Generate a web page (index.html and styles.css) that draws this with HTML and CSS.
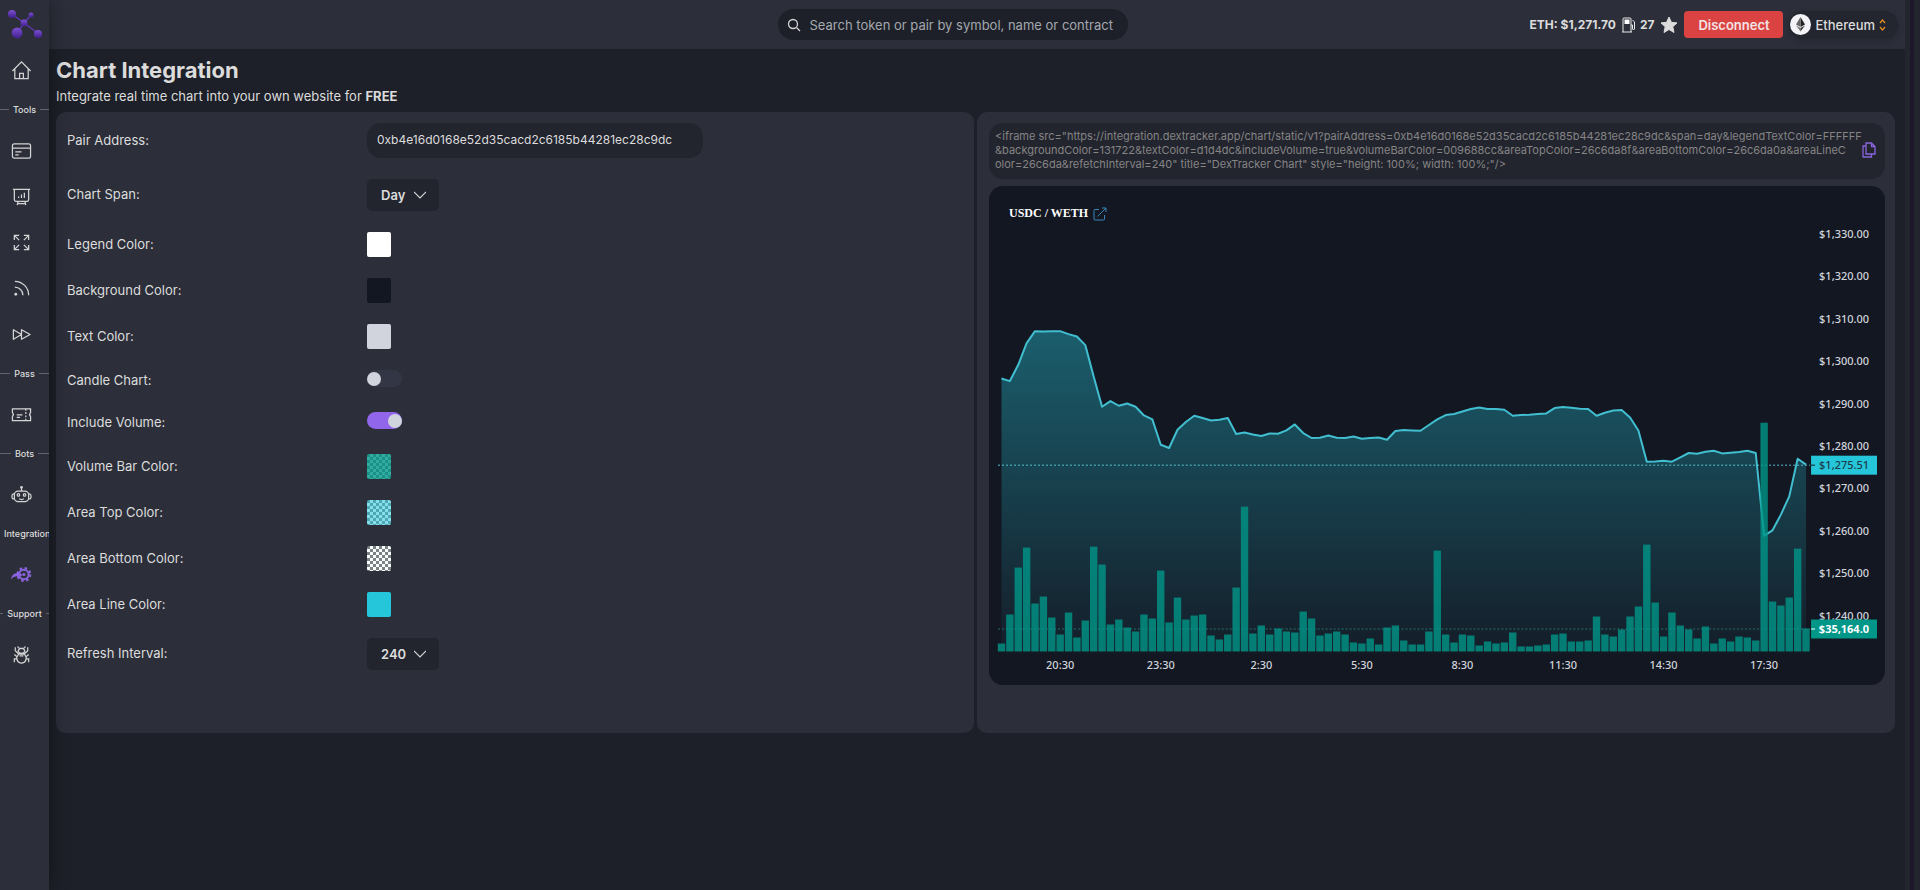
FILE: index.html
```html
<!DOCTYPE html>
<html lang="en">
<head>
  <meta charset="UTF-8" />
  <title>Chart Integration</title>
  <link rel="stylesheet" href="styles.css">
</head>
<body>
  <aside class="sidebar">
    <a class="logo" href="#" aria-label="DexTracker">
      <svg width="36" height="30" viewBox="0 0 36 30">
        <defs>
          <linearGradient id="ball" x1="0" y1="0" x2="0" y2="1">
            <stop offset="0" stop-color="#7d4fd0" />
            <stop offset="1" stop-color="#41208f" />
          </linearGradient>
        </defs>
        <path d="M5 5L17 14L32 25M24 6L17 14L10 24" stroke="#5f37b4" stroke-width="1.4" fill="none" />
        <g fill="url(#ball)">
          <circle cx="5" cy="5" r="4" />
          <circle cx="24" cy="6" r="2.5" />
          <circle cx="17" cy="14" r="3.4" />
          <circle cx="10" cy="24" r="5.4" />
          <circle cx="31" cy="25" r="4" />
        </g>
      </svg>
    </a>
    <nav>
      <a class="nav-item" href="#" aria-label="Home">
        <svg viewBox="0 0 22 22"><path d="M1.500 11.500L11 2L20.500 11.500M4 9.500V19.500H18V9.500M9 19.500V14H13V19.500" /></svg>
      </a>
      <div class="divider"><span>Tools</span></div>
      <a class="nav-item" href="#" aria-label="Card">
        <svg viewBox="0 0 22 22"><rect x="1.500" y="4" width="19" height="15" rx="2" /><path d="M1.500 8.500H20.500M4.500 12.500H11M4.500 15.500H8" /></svg>
      </a>
      <a class="nav-item" href="#" aria-label="Charts">
        <svg viewBox="0 0 22 22"><path d="M2 3.500H20M3.500 3.500V14.500Q3.500 16 5 16H17Q18.500 16 18.500 14.500V3.500M8 12.500V11M11 12.500V9M14 12.500V7M7.500 16L6.500 20M14.500 16L15.500 20M7 18.500H15" /></svg>
      </a>
      <a class="nav-item" href="#" aria-label="Multi chart">
        <svg viewBox="0 0 22 22"><path d="M3.500 8.500V3.500H8.500M3.500 3.500L8.500 8.500M13.500 3.500H18.500V8.500M18.500 3.500L13.500 8.500M3.500 13.500V18.500H8.500M3.500 18.500L8.500 13.500M18.500 13.500V18.500H13.500M18.500 18.500L13.500 13.500" /></svg>
      </a>
      <a class="nav-item" href="#" aria-label="Feed">
        <svg viewBox="0 0 22 22"><path d="M4 3.500A14.500 14.500 0 0 1 18.500 18M4 9.500A8.500 8.500 0 0 1 12.500 18" /><circle class="dot" cx="5" cy="17" r="1.500" /></svg>
      </a>
      <a class="nav-item" href="#" aria-label="Fast forward">
        <svg viewBox="0 0 22 22"><path d="M2.500 6V16L11 11ZM11 6V16L20 11Z" stroke-linejoin="round" /></svg>
      </a>
      <div class="divider"><span>Pass</span></div>
      <a class="nav-item" href="#" aria-label="Pass">
        <svg viewBox="0 0 22 22"><path d="M1.500 5H20.500V9Q18.500 11 20.500 13V17.500H1.500V13Q3.500 11 1.500 9ZM6 11.500H12M6 14H9.500" /><path d="M15.500 5V17.500" stroke-dasharray="2 1.500" /></svg>
      </a>
      <div class="divider"><span>Bots</span></div>
      <a class="nav-item" href="#" aria-label="Bots">
        <svg viewBox="0 0 22 22"><rect x="3.500" y="7.500" width="15" height="11" rx="4" /><path d="M3.500 10.500Q1 10 1 13Q1 16 3.500 15.500M18.500 10.500Q21 10 21 13Q21 16 18.500 15.500M11 7.500V4M8.500 15.500Q11 17 13.500 15.500" /><circle cx="7.800" cy="11.500" r="1.300" /><circle cx="14.200" cy="11.500" r="1.300" /><circle class="dot" cx="11" cy="3.500" r="1.400" /></svg>
      </a>
      <div class="divider"><span>Integration</span></div>
      <a class="nav-item active" href="#" aria-label="Integration">
        <svg viewBox="0 0 22 22"><circle cx="13.500" cy="11" r="5" stroke-width="2.200" /><circle cx="13.500" cy="11" r="6.800" stroke-width="2" stroke-dasharray="2.670 2.670" /><circle class="dot" cx="13.500" cy="11" r="1.700" /><path class="dot" d="M0 16Q1 9.500 7 9.500V7.500L12 11.500L7 15V13Q3 12.500 0 16Z" /></svg>
      </a>
      <div class="divider"><span>Support</span></div>
      <a class="nav-item" href="#" aria-label="Report a bug">
        <svg viewBox="0 0 22 22"><path d="M7 2.500Q7.500 4.500 9 4.500H13Q14.500 4.500 15 2.500M7.500 7.500Q8 4.500 11 4.500Q14 4.500 14.500 7.500L13 9.500H9ZM8 10.500H14L16 14Q16 20 11 20Q6 20 6 14ZM4.500 3.500V7L8 10.500M17.500 3.500V7L14 10.500M6 13L3.500 11M16 13L18.500 11M6 15.500H3.500V19M16 15.500H18.500V19M9 12.500H13" /></svg>
      </a>
    </nav>
  </aside>

  <div class="page">
    <header>
      <form class="search">
        <svg width="14" height="14" viewBox="0 0 14 14"><circle cx="6" cy="6" r="4.500" /><path d="M9.500 9.500L13 13" /></svg>
        <input type="text" aria-label="Search" placeholder="Search token or pair by symbol, name or contract">
      </form>
      <div class="account">
        <span>ETH: $1,271.70</span>
        <span class="gas">
          <svg width="14" height="16" viewBox="0 0 14 16"><path d="M1 15V2Q1 1 2 1H8Q9 1 9 2V15M0 15H10M9 8H10.500V12Q11.500 14 12.500 12V5L10.500 3" stroke="#e8e8e8" fill="none" /><path d="M2.500 2.500H7.500V7H2.500Z" fill="#fff" /></svg>
          27
        </span>
        <button class="star" aria-label="Favorites">
          <svg width="18" height="18" viewBox="0 0 18 18"><path d="M9 1L11.400 6.300L17 6.900L12.800 10.700L14 16.500L9 13.500L4 16.500L5.200 10.700L1 6.900L6.600 6.300Z" fill="#dcdcdc" stroke="#dcdcdc" stroke-linejoin="round" /></svg>
        </button>
        <button class="disconnect">Disconnect</button>
        <button class="network">
          <svg width="21" height="21" viewBox="0 0 21 21"><circle cx="10.500" cy="10.500" r="10.500" fill="#f4f4f8" /><path d="M10.500 3L15 10.500L10.500 13Z" fill="#222" /><path d="M10.500 3L6 10.500L10.500 13Z" fill="#666" /><path d="M6 11.500L10.500 17.500V14Z" fill="#777" /><path d="M15 11.500L10.500 17.500V14Z" fill="#333" /></svg>
          Ethereum
          <svg width="7" height="12" viewBox="0 0 7 12"><path d="M1 4L3.500 1L6 4M1 8L3.500 11L6 8" stroke="#e8911c" stroke-width="1.200" fill="none" /></svg>
        </button>
      </div>
    </header>

    <main>
      <h1>Chart Integration</h1>
      <p class="intro">Integrate real time chart into your own website for <b>FREE</b></p>

      <div class="panels">
        <form class="card settings">
          <div class="row">
            <label for="pair">Pair Address:</label>
            <input id="pair" class="address" type="text" value="0xb4e16d0168e52d35cacd2c6185b44281ec28c9dc">
          </div>
          <div class="row">
            <label for="span">Chart Span:</label>
            <div class="dropdown">
              <select id="span"><option>Day</option></select>
              <svg width="12" height="8" viewBox="0 0 12 8"><path d="M0 1L6 7L12 1" /></svg>
            </div>
          </div>
          <div class="row">
            <label for="legend">Legend Color:</label>
            <button id="legend" type="button" class="swatch legend"></button>
          </div>
          <div class="row">
            <label for="background">Background Color:</label>
            <button id="background" type="button" class="swatch background"></button>
          </div>
          <div class="row">
            <label for="text">Text Color:</label>
            <button id="text" type="button" class="swatch text"></button>
          </div>
          <div class="row toggle-row">
            <label for="candle">Candle Chart:</label>
            <input id="candle" class="toggle" type="checkbox">
          </div>
          <div class="row toggle-row">
            <label for="volume">Include Volume:</label>
            <input id="volume" class="toggle" type="checkbox" checked>
          </div>
          <div class="row">
            <label for="bar">Volume Bar Color:</label>
            <button id="bar" type="button" class="swatch bar"></button>
          </div>
          <div class="row">
            <label for="top">Area Top Color:</label>
            <button id="top" type="button" class="swatch top"></button>
          </div>
          <div class="row">
            <label for="bottom">Area Bottom Color:</label>
            <button id="bottom" type="button" class="swatch bottom"></button>
          </div>
          <div class="row">
            <label for="line">Area Line Color:</label>
            <button id="line" type="button" class="swatch line"></button>
          </div>
          <div class="row">
            <label for="refresh">Refresh Interval:</label>
            <div class="dropdown">
              <select id="refresh"><option>240</option></select>
              <svg width="12" height="8" viewBox="0 0 12 8"><path d="M0 1L6 7L12 1" /></svg>
            </div>
          </div>
        </form>

        <section class="card preview">
          <div class="snippet">
            <code>&lt;iframe src="https://integration.dextracker.app/chart/static/v1?pairAddress=0xb4e16d0168e52d35cacd2c6185b44281ec28c9dc&amp;span=day&amp;legendTextColor=FFFFFF<br>&amp;backgroundColor=131722&amp;textColor=d1d4dc&amp;includeVolume=true&amp;volumeBarColor=009688cc&amp;areaTopColor=26c6da8f&amp;areaBottomColor=26c6da0a&amp;areaLineC<br>olor=26c6da&amp;refetchInterval=240" title="DexTracker Chart" style="height: 100%; width: 100%;"/&gt;</code>
            <button class="copy" aria-label="Copy">
              <svg width="14" height="16" viewBox="0 0 14 16"><path d="M4 1H9.500L13 4.500V12H4ZM9.500 1V4.500H13M4 4H1V15H9.500V12" /></svg>
            </button>
          </div>
          <div class="chart">
            <svg id="chart" viewBox="0 0 897 500"></svg>
            <a class="pair" href="#">
              USDC / WETH
              <svg width="14" height="14" viewBox="0 0 14 14"><path d="M6 2.500H2Q1 2.500 1 3.500V12Q1 13 2 13H10.500Q11.500 13 11.500 12V8M4.500 9.500L13 1M9 1H13V5" /></svg>
            </a>
          </div>
        </section>
      </div>
    </main>
  </div>
  <div class="scrollbar"></div>

  <script src="chart.js"></script>
</body>
</html>
```
FILE: styles.css
```css
* {
  box-sizing: border-box;
}

body {
  margin: 0;
  display: flex;
  min-height: 100vh;
  background: #1d2028;
  color: #dcdcdc;
  font-family: Inter, sans-serif;
  font-size: 13px;
}

button,
input,
select {
  font: inherit;
  color: inherit;
  border: none;
  outline: none;
  padding: 0;
  margin: 0;
}

button {
  background: none;
  cursor: pointer;
}

/* sidebar */
.sidebar {
  width: 49px;
  flex: none;
  background: #2c2f3a;
  box-shadow: 0 0 20px rgba(0, 0, 0, 0.4);
  overflow: hidden;
  z-index: 1;
}

.logo {
  display: block;
  height: 47px;
  padding: 9px 0 0 7px;
}

.nav-item {
  display: flex;
  align-items: center;
  height: 46px;
  padding-left: 11px;
}

.nav-item svg {
  width: 21px;
  height: 21px;
  fill: none;
  stroke: #d4d4d4;
  stroke-width: 1.3;
}

.nav-item .dot {
  fill: #d4d4d4;
  stroke: none;
}

.nav-item.active svg {
  stroke: #8b64dd;
}

.nav-item.active .dot {
  fill: #8b64dd;
}

.divider {
  display: flex;
  align-items: center;
  gap: 4px;
  height: 34px;
  padding-bottom: 2px;
  font-size: 9px;
  font-weight: 500;
}

.divider::before,
.divider::after {
  content: "";
  flex: 1;
  height: 1px;
  background: #60636c;
}

/* header */
.page {
  flex: 1;
  min-width: 0;
}

header {
  display: grid;
  grid-template-columns: 1fr 350px 1fr;
  align-items: center;
  height: 49px;
  padding-right: 49px;
  background: #2c2f3a;
}

.search {
  grid-column: 2;
  display: flex;
  align-items: center;
  gap: 9px;
  height: 31px;
  padding: 0 9px;
  border-radius: 16px;
  background: #1d2028;
}

.search svg {
  flex: none;
  fill: none;
  stroke: #d4d4d4;
  stroke-width: 1.3;
}

.search input {
  flex: 1;
  min-width: 0;
  background: none;
}

.search input::placeholder {
  color: #a3a8ae;
  opacity: 1;
}

.account {
  display: flex;
  align-items: center;
  justify-content: flex-end;
  gap: 6px;
  margin-right: -42px;
  font-weight: 600;
}

.account span {
  font-size: 12px;
  font-weight: 700;
}

.gas {
  display: flex;
  align-items: center;
  gap: 4px;
}

.star {
  display: flex;
}

.disconnect {
  width: 99px;
  height: 27px;
  border-radius: 4px;
  background: #db4343;
  color: #f4e4e4;
}

.network {
  display: flex;
  align-items: center;
  gap: 4px;
  height: 28px;
  padding: 0 12px 0 1px;
  border-radius: 14px;
  background: #23252f;
  box-shadow: 0 2px 6px rgba(0, 0, 0, 0.2);
  font-weight: 500;
}

/* content */
main {
  padding: 9px 10px 0 7px;
}

h1 {
  margin: 0;
  font-size: 22px;
  line-height: 24px;
}

.intro {
  margin: 4px 0 6px;
  line-height: 20px;
}

.panels {
  display: grid;
  grid-template-columns: 1fr 1fr;
  gap: 3px;
}

.card {
  min-height: 621px;
  padding: 11px 10px 11px 11px;
  border-radius: 10px;
  background: #2c2f3a;
}

.preview {
  padding-left: 12px;
}

.settings {
  display: flex;
  flex-direction: column;
  gap: 21px;
}

.row {
  display: flex;
  align-items: center;
}

.row label {
  width: 300px;
  padding-bottom: 2px;
}

.address {
  width: 336px;
  height: 35px;
  padding: 0 10px 2px;
  border-radius: 14px;
  background: #22242e;
  font-size: 12px;
}

.dropdown {
  position: relative;
}

.dropdown select {
  appearance: none;
  width: 72px;
  height: 32px;
  padding-left: 14px;
  border-radius: 5px;
  background: #22242e;
  font-weight: 600;
}

.dropdown svg {
  position: absolute;
  right: 13px;
  top: 12px;
  fill: none;
  stroke: #d4d4d4;
  stroke-width: 1.2;
  pointer-events: none;
}

.swatch {
  width: 24px;
  height: 25px;
  border-radius: 2px;
  --checker: repeating-conic-gradient(#fff 0 25%, #808080 0 50%) 0 0 / 6px 6px;
}

.legend { background: #fff; }
.background { background: #131722; }
.text { background: #d1d4dc; }
.line { background: #26c6da; }
.bar { background: linear-gradient(#009688cc, #009688cc), var(--checker); }
.top { background: linear-gradient(#26c6da8f, #26c6da8f), var(--checker); }
.bottom { background: linear-gradient(#26c6da0a, #26c6da0a), var(--checker); }

.toggle-row {
  height: 21px;
}

.toggle {
  appearance: none;
  display: flex;
  align-items: center;
  align-self: flex-start;
  width: 35px;
  height: 17px;
  border-radius: 9px;
  background: #333644;
}

.toggle::before {
  content: "";
  width: 14px;
  height: 14px;
  border-radius: 50%;
  background: #d1d4dc;
}

.toggle:checked {
  justify-content: flex-end;
  background: #9166ea;
}

/* preview */
.snippet {
  display: flex;
  align-items: center;
  height: 56px;
  margin-bottom: 7px;
  padding: 0 9px 2px 6px;
  border-radius: 14px;
  background: #22242e;
}

.snippet code {
  flex: 1;
  min-width: 0;
  white-space: nowrap;
  font-family: inherit;
  font-size: 11px;
  line-height: 14px;
  color: #858585;
}

.copy svg {
  display: block;
  fill: none;
  stroke: #8b64dd;
  stroke-width: 1.3;
}

.chart {
  position: relative;
  border-radius: 14px;
  overflow: hidden;
  background: #131722;
}

.chart > svg {
  display: block;
  width: 100%;
  font-family: "Noto Sans", sans-serif;
  font-size: 11px;
  font-weight: 500;
}

.pair {
  position: absolute;
  left: 20px;
  top: 20px;
  display: flex;
  align-items: center;
  gap: 5px;
  font-family: "Liberation Serif", serif;
  font-size: 12px;
  font-weight: bold;
  color: #fff;
  text-decoration: none;
}

.pair svg {
  fill: none;
  stroke: #3a86b8;
}

.axis {
  fill: #d1d4dc;
}

.scrollbar {
  width: 15px;
  flex: none;
  background: linear-gradient(90deg, #22242e 5px, #1d1829 5px 9px, #22242e 9px);
}
```
FILE: chart.js
```js
const svg = document.getElementById('chart');
const STEP = 8.39;
const START = 12.5;
const BASE = 466;

// bar heights in thirds of a pixel
const volume = [
  24, 111, 252, 312, 144, 165, 102, 51, 117, 42, 93, 315, 261, 81, 96, 72, 60, 111, 99, 243,
  87, 162, 96, 108, 111, 48, 36, 51, 192, 435, 54, 78, 51, 69, 60, 57, 120, 99, 48, 54,
  60, 51, 27, 24, 39, 21, 72, 78, 33, 21, 21, 60, 303, 51, 27, 51, 48, 18, 30, 24,
  27, 57, 15, 15, 18, 21, 51, 54, 30, 30, 33, 105, 51, 45, 66, 105, 135, 321, 147, 45,
  117, 78, 66, 39, 75, 24, 39, 30, 45, 42, 33, 687, 150, 138, 162, 309, 69
];

const price = [
  192.7, 195.3, 179, 157.3, 145.3, 145.7, 145.3, 145.3, 148.3, 150.7, 159.3, 190.7, 221, 215.3, 220, 217.7,
  221, 229.7, 233.7, 259, 262.3, 244, 236.3, 230, 232.3, 234.7, 234, 232.3, 248.3, 246.7, 248.7, 250.3,
  247.7, 248, 244.7, 238.7, 247.3, 252.3, 252, 249.7, 252, 252.3, 250.7, 253, 252.3, 251.7, 254, 245.3,
  244.3, 244.7, 245, 239.3, 233.7, 229.3, 228.3, 225.7, 223.3, 221.7, 223.3, 223.3, 224, 230, 229.3, 229,
  228.3, 227.7, 222.3, 221.3, 222, 223, 223.3, 230, 227, 224.7, 224.3, 231.7, 244.7, 276, 275.7, 275,
  276, 271.7, 267.3, 268, 266, 265, 267.7, 267, 266.3, 265, 267.3, 350, 344.7, 329, 310.7, 273, 279
];

const x = i => START + i * STEP;
const points = price.map((y, i) => `${x(i)},${y}`).join(' ');

let out = `
  <defs>
    <linearGradient id="area" gradientUnits="userSpaceOnUse" x1="0" y1="10" x2="0" y2="${BASE}">
      <stop offset="0" stop-color="#26c6da8f" />
      <stop offset="1" stop-color="#26c6da0a" />
    </linearGradient>
  </defs>
  <polygon points="${x(0)},${BASE} ${points} ${x(96)},${BASE}" fill="url(#area)" />
  <polyline points="${points}" fill="none" stroke="#41bfd0" stroke-width="2" stroke-linejoin="round" />
  <line x1="9" x2="822" y1="279.5" y2="279.5" stroke="#58c4d2" stroke-dasharray="2 2" />
  <line x1="9" x2="822" y1="443.5" y2="443.5" stroke="#23736f" stroke-dasharray="2 2" />`;

volume.forEach((v, i) => {
  out += `<rect x="${x(i) - 3.7}" y="${BASE - v / 3}" width="7.4" height="${v / 3}" fill="#009688" fill-opacity="0.8" />`;
});

for (let i = 0; i < 10; i++) {
  const label = '$1,' + (330 - i * 10) + '.00';
  out += `<text class="axis" x="881" y="${52 + i * 42.45}" text-anchor="end">${label}</text>`;
}

['20:30', '23:30', '2:30', '5:30', '8:30', '11:30', '14:30', '17:30'].forEach((t, i) => {
  out += `<text class="axis" x="${x(7 + i * 12)}" y="484" text-anchor="middle">${t}</text>`;
});

out += `
  <rect x="823" y="270" width="66" height="19" fill="#26c6da" />
  <path d="M823 279.500H827" stroke="#131722" />
  <text x="881" y="283.500" text-anchor="end" fill="#1b3c4a">$1,275.51</text>
  <rect x="823" y="434" width="66" height="19" fill="#009688" />
  <path d="M823 443.500H827" stroke="#fff" />
  <text x="881" y="447.500" text-anchor="end" fill="#fff" font-weight="700">$35,164.0</text>`;

svg.innerHTML = out;
```
